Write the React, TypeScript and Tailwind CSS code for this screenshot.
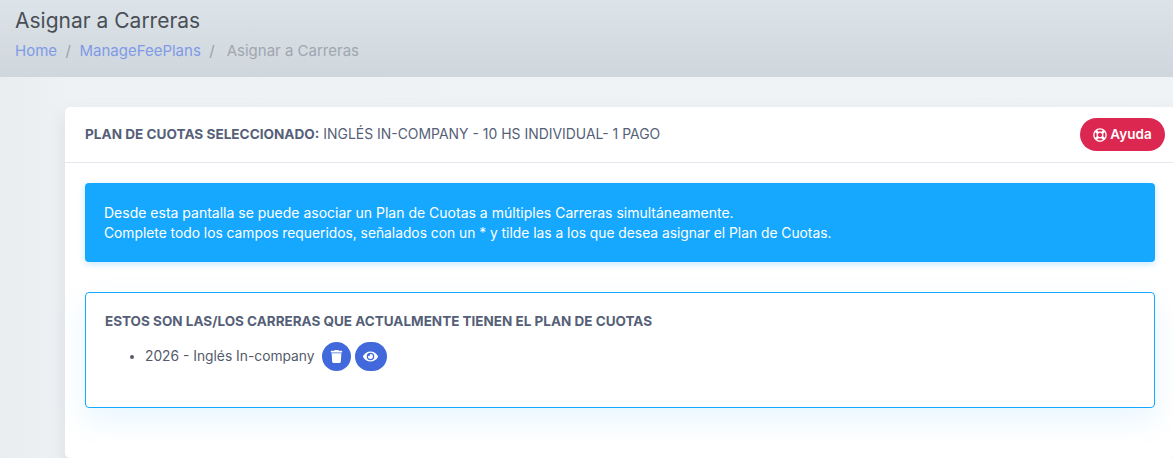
import { FaEye, FaRegLifeRing, FaTrash } from "react-icons/fa"

export default function App() {
    return (
        <div className="h-[458px] w-[1173px] overflow-hidden bg-gradient-to-r from-[#eaedf0] via-[#eff2f4] via-[6%] to-[#eff3f6] font-['Inter','Open_Sans',sans-serif] text-[#4e5a72]">
            <header className="h-[77px] bg-gradient-to-b from-[#dce4e9] to-[#cfd6dd] pl-[15px] pt-[7px]">
                <h1 className="text-[21px] leading-[28px] font-normal text-[#4a4f57]">Asignar a Carreras</h1>
                <nav className="mt-[6px] flex items-center text-[15px] leading-[20px]">
                    <a className="text-[#7f9ae6]">Home</a>
                    <span className="mx-[8.5px] text-[#98a0aa]">/</span>
                    <a className="text-[#7f9ae6]">ManageFeePlans</a>
                    <span className="ml-[8.5px] mr-[12px] text-[#98a0aa]">/</span>
                    <span className="text-[#a0a6af]">Asignar a Carreras</span>
                </nav>
            </header>

            <main className="pl-[65px] pt-[30px]">
                <section className="h-[351px] w-[1110px] rounded-[5px] bg-white shadow-[0_8px_18px_rgba(100,110,130,0.16)]">
                    <div className="flex h-[56px] items-center justify-between border-b border-[#e4e7ee] pl-[20px] pr-[10px]">
                        <p className="text-[13.95px] text-[#565f78]">
                            <span className="text-[13.6px] font-bold">PLAN DE CUOTAS SELECCIONADO:</span> INGLÉS IN-COMPANY - 10 HS INDIVIDUAL- 1 PAGO
                        </p>
                        <button className="flex h-[33px] w-[85px] items-center justify-center gap-[3px] rounded-full bg-[#dc2751] text-[13.5px] font-semibold text-white">
                            <FaRegLifeRing className="text-[14px]" />
                            Ayuda
                        </button>
                    </div>

                    <div className="px-[20px] pt-[20px]">
                        <div className="h-[79px] w-[1070px] rounded-[4px] bg-[#16a8ff] px-[19px] py-[20px] text-[13.8px] leading-[20px] text-white shadow-[0_2px_6px_rgba(22,168,255,0.25)]">
                            <p className="text-[14px]">Desde esta pantalla se puede asociar un Plan de Cuotas a múltiples Carreras simultáneamente.</p>
                            <p>Complete todo los campos requeridos, señalados con un * y tilde las a los que desea asignar el Plan de Cuotas.</p>
                        </div>

                        <div className="mt-[30px] h-[116px] w-[1070px] rounded-[4px] border border-[#16a8ff] pl-[19px] pt-[18px] shadow-[0_12px_30px_rgba(22,168,255,0.1)]">
                            <h2 className="text-[13.5px] leading-[20px] font-bold text-[#565f78]">ESTOS SON LAS/LOS CARRERAS QUE ACTUALMENTE TIENEN EL PLAN DE CUOTAS</h2>
                            <ul className="mt-[11px] list-disc pl-[40px] text-[13.8px] text-[#555b6b]">
                                <li>
                                    <div className="flex items-center">
                                        <span>2026 - Inglés In-company</span>
                                        <button className="ml-[7px] flex h-[29px] w-[29px] items-center justify-center rounded-full bg-[#4169db] text-white">
                                            <FaTrash className="text-[13px]" />
                                        </button>
                                        <button className="ml-[4px] flex h-[29px] w-[32px] items-center justify-center rounded-full bg-[#4169db] text-white">
                                            <FaEye className="text-[15px]" />
                                        </button>
                                    </div>
                                </li>
                            </ul>
                        </div>
                    </div>
                </section>
            </main>
        </div>
    )
}
